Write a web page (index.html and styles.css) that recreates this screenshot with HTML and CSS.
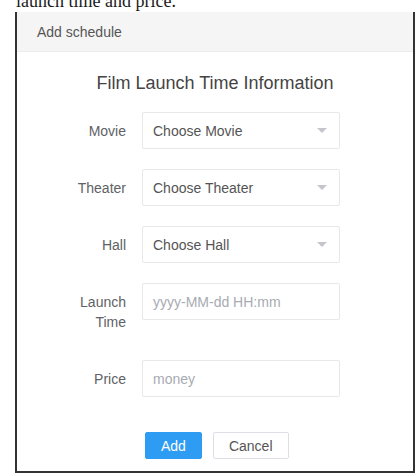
FILE: index.html
```html
<!DOCTYPE html>
<html>
<head>
<meta charset="utf-8">
<link rel="stylesheet" href="styles.css">
</head>
<body>
<div class="doc-clip"><p class="doc-text">launch time and price.</p></div>
<div class="dialog">
  <div class="dialog-header">Add schedule</div>
  <div class="dialog-body">
    <h2 class="form-title">Film Launch Time Information</h2>
    <div class="form-row">
      <label class="form-label">Movie</label>
      <div class="field select"><span class="value">Choose Movie</span><span class="caret"></span></div>
    </div>
    <div class="form-row">
      <label class="form-label">Theater</label>
      <div class="field select"><span class="value">Choose Theater</span><span class="caret"></span></div>
    </div>
    <div class="form-row">
      <label class="form-label">Hall</label>
      <div class="field select"><span class="value">Choose Hall</span><span class="caret"></span></div>
    </div>
    <div class="form-row">
      <label class="form-label">Launch<br>Time</label>
      <div class="field"><span class="placeholder">yyyy-MM-dd HH:mm</span></div>
    </div>
    <div class="form-row">
      <label class="form-label">Price</label>
      <div class="field"><span class="placeholder">money</span></div>
    </div>
    <div class="actions">
      <button class="btn btn-primary">Add</button>
      <button class="btn">Cancel</button>
    </div>
  </div>
</div>
</body>
</html>
```
FILE: styles.css
```css
html, body {
  margin: 0;
  padding: 0;
  background: #ffffff;
}
body {
  font-family: "Liberation Sans", Arial, sans-serif;
}
.doc-clip {
  height: 12px;
  overflow: hidden;
  padding-left: 16px;
}
.doc-text {
  margin: -9px 0 0 0;
  font-family: "Liberation Serif", "Times New Roman", serif;
  font-size: 18px;
  color: #1a1a1a;
  line-height: 21px;
}
.dialog {
  margin-left: 15px;
  width: 396px;
  border-left: 2px solid #333333;
  border-right: 2px solid #333333;
  border-bottom: 2px solid #333333;
  background: #ffffff;
}
.dialog-header {
  height: 40px;
  line-height: 40px;
  background: #f5f5f5;
  border-bottom: 1px solid #ececec;
  box-sizing: border-box;
  padding-left: 20px;
  font-size: 14px;
  color: #555555;
}
.dialog-body {
  padding: 19px 0 12px 0;
}
.form-title {
  margin: 0 0 17px 0;
  font-weight: normal;
  font-size: 18px;
  line-height: 24px;
  text-align: center;
  color: #444444;
}
.form-row {
  display: flex;
  align-items: flex-start;
  gap: 16px;
  margin-bottom: 20px;
}
.form-label {
  width: 109px;
  flex: none;
  text-align: right;
  font-size: 14px;
  line-height: 20px;
  padding: 9px 0 8px 0;
  color: #606266;
}
.field {
  width: 198px;
  height: 37px;
  box-sizing: border-box;
  border: 1px solid #e6e8eb;
  border-radius: 2px;
  display: flex;
  align-items: center;
  padding: 0 12px 0 10px;
  font-size: 14px;
}
.value {
  flex: 1;
  color: #555555;
}
.placeholder {
  flex: 1;
  color: #a8abb2;
}
.caret {
  width: 0;
  height: 0;
  border-left: 5px solid transparent;
  border-right: 5px solid transparent;
  border-top: 5px solid #c4c6cc;
}
.actions {
  display: flex;
  gap: 11px;
  padding-left: 128px;
  margin-top: 35px;
}
.btn {
  height: 27px;
  padding: 0 15px;
  font-family: "Liberation Sans", Arial, sans-serif;
  font-size: 14px;
  border: 1px solid #dcdfe6;
  background: #ffffff;
  color: #555555;
  border-radius: 2px;
}
.btn-primary {
  background: #2d9cf2;
  border-color: #2d9cf2;
  color: #ffffff;
}
```
